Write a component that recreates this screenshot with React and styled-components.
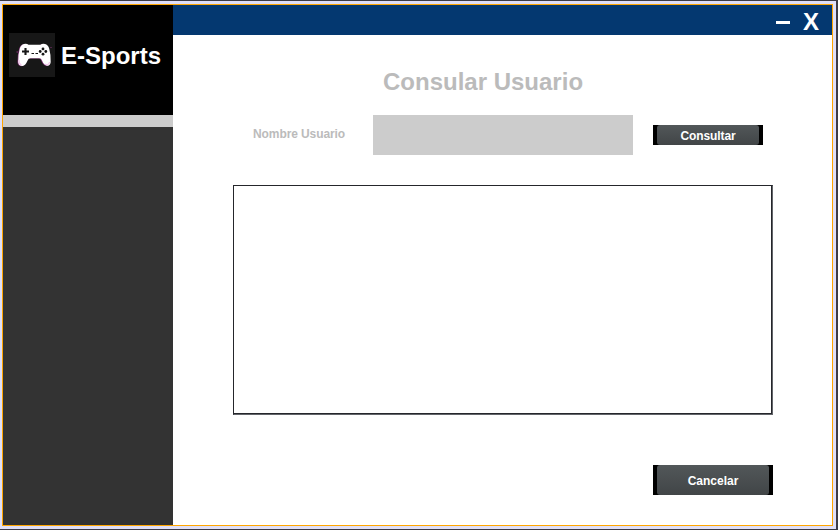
import React from "react";
import styled, { createGlobalStyle } from "styled-components";

const GlobalStyle = createGlobalStyle`
  * { box-sizing: border-box; }
  body {
    margin: 0;
    overflow: hidden;
    font-family: "Liberation Sans", Arial, sans-serif;
    font-weight: bold;
  }
`;

const Desktop = styled.div`
  width: 838px;
  height: 530px;
  padding: 1px 2px 1px 0;
  background: #3c3b46;
`;

const Frame = styled.div`
  height: 528px;
  padding: 3px 3px 3px 2px;
  background: #dfdff8;
`;

const Window = styled.div`
  display: flex;
  height: 522px;
  border: 1px solid #ffa500;
  background: #fff;
`;

const Sidebar = styled.aside`
  width: 170px;
  background: #333;
`;

const Brand = styled.div`
  display: flex;
  height: 110px;
  padding: 28px 0 0 6px;
  background: #000;
`;

const Logo = styled.svg`
  display: block;
  width: 46px;
  height: 44px;
  background: #171717;
`;

const BrandName = styled.span`
  margin: 9px 0 0 6px;
  color: #fff;
  font-size: 24px;
  line-height: 28px;
  white-space: nowrap;
`;

const Divider = styled.div`
  height: 12px;
  background: #ccc;
`;

const Main = styled.main`
  flex: 1;
`;

const TitleBar = styled.header`
  display: flex;
  justify-content: flex-end;
  height: 30px;
  padding-right: 6px;
  background: #043870;
`;

const WindowControl = styled.button`
  display: flex;
  justify-content: center;
  width: ${(p) => p.$width}px;
  height: 30px;
  padding: 0;
  border: 0;
  background: none;
  color: #fff;
`;

const Minus = styled.span`
  width: 14px;
  height: 3px;
  margin-top: 16px;
  background: #fff;
`;

const Cross = styled.span`
  padding-top: 3px;
  font: bold 24px/28px "Liberation Sans", Arial, sans-serif;
`;

const Content = styled.section`
  display: flex;
  flex-direction: column;
  padding: 33px 59px 0 60px;
`;

const Title = styled.h1`
  margin: 0 0 19px 150px;
  color: #bbb;
  font-size: 24px;
  line-height: 28px;
  white-space: nowrap;
`;

const SearchRow = styled.form`
  display: flex;
  align-items: center;
  height: 40px;
  margin-bottom: 30px;
  padding-left: 20px;
`;

const Label = styled.label`
  width: 120px;
  margin-top: -3px;
  color: #bbb;
  font-size: 12px;
  line-height: 14px;
  letter-spacing: -0.09px;
`;

const Input = styled.input`
  width: 260px;
  height: 40px;
  margin-right: 20px;
  padding: 0 8px;
  border: 0;
  border-radius: 0;
  background: #ccc;
  outline: none;
`;

const Results = styled.div`
  width: 540px;
  height: 230px;
  margin-bottom: 50px;
  border: 1px solid #25262b;
  border-right-color: #62656a;
  border-bottom-color: #62656a;
  box-shadow: inset -1px -1px #25262b;
`;

const ActionButton = styled.button`
  width: ${(p) => p.$width}px;
  height: ${(p) => p.$height}px;
  padding: 0 4px;
  border: 0;
  background: #000;
  color: #fff;
  font: bold 12px/14px "Liberation Sans", Arial, sans-serif;
`;

const ButtonFace = styled.span`
  display: flex;
  align-items: center;
  justify-content: center;
  height: 100%;
  padding-top: 2px;
  border-radius: 3px;
  background: linear-gradient(#525759, #414547);
  letter-spacing: ${(p) => (p.$tight ? "-0.1px" : "normal")};
`;

const Footer = styled.footer`
  display: flex;
  justify-content: flex-end;
`;

const BODY =
  "M15 11 Q18 10.5 19.5 11.8 H31.5 Q33 10.5 36 11 Q39 11.5 40.2 15.5 Q42 22 41.7 29 Q41.2 33 38.2 32.8 Q35 32.5 33 27.5 Q32.2 25.3 30.5 25.3 H21.5 Q19.4 25.3 18.6 27.5 Q16.5 32.5 13.5 33 Q9.5 33 9.2 29 Q9 22 10.8 15.5 Q12 11.5 15 11Z";

function Gamepad() {
  return (
    <Logo viewBox="0 0 46 44" aria-label="Gamepad">
      <path d={BODY} fill="#b43ba5" opacity=".65" transform="translate(-.7 .3)" />
      <path d={BODY} fill="#fff" />
      <path
        d="M10 27 Q10 31 12.5 32 M36 31 Q39 33 40.7 29"
        fill="none"
        stroke="#f3c6ec"
        strokeWidth="1.3"
      />
      <path d="M13 18.5 H20 M16.5 15 V22" stroke="#171717" strokeWidth="2.1" />
      <path d="M22.5 20.5 H25 M26.5 20.5 H29" stroke="#171717" strokeWidth="1.1" />
      <g fill="#171717">
        <circle cx="34" cy="15.9" r="1.4" />
        <circle cx="31.2" cy="18.5" r="1.4" />
        <circle cx="36.8" cy="18.5" r="1.4" />
        <circle cx="34" cy="21.2" r="1.4" />
      </g>
      <path d="M7.5 19 H9 M42 14 V15" stroke="#8c347e" strokeWidth="1" />
    </Logo>
  );
}

export default function App() {
  return (
    <>
      <GlobalStyle />
      <Desktop>
        <Frame>
          <Window>
            <Sidebar>
              <Brand>
                <Gamepad />
                <BrandName>E-Sports</BrandName>
              </Brand>
              <Divider />
            </Sidebar>
            <Main>
              <TitleBar>
                <WindowControl $width={26} aria-label="Minimizar">
                  <Minus />
                </WindowControl>
                <WindowControl $width={30} aria-label="Cerrar">
                  <Cross>X</Cross>
                </WindowControl>
              </TitleBar>
              <Content>
                <Title>Consular Usuario</Title>
                <SearchRow>
                  <Label htmlFor="usuario">Nombre Usuario</Label>
                  <Input id="usuario" />
                  <ActionButton type="button" $width={110} $height={20}>
                    <ButtonFace $tight>Consultar</ButtonFace>
                  </ActionButton>
                </SearchRow>
                <Results />
                <Footer>
                  <ActionButton type="button" $width={120} $height={30}>
                    <ButtonFace>Cancelar</ButtonFace>
                  </ActionButton>
                </Footer>
              </Content>
            </Main>
          </Window>
        </Frame>
      </Desktop>
    </>
  );
}
